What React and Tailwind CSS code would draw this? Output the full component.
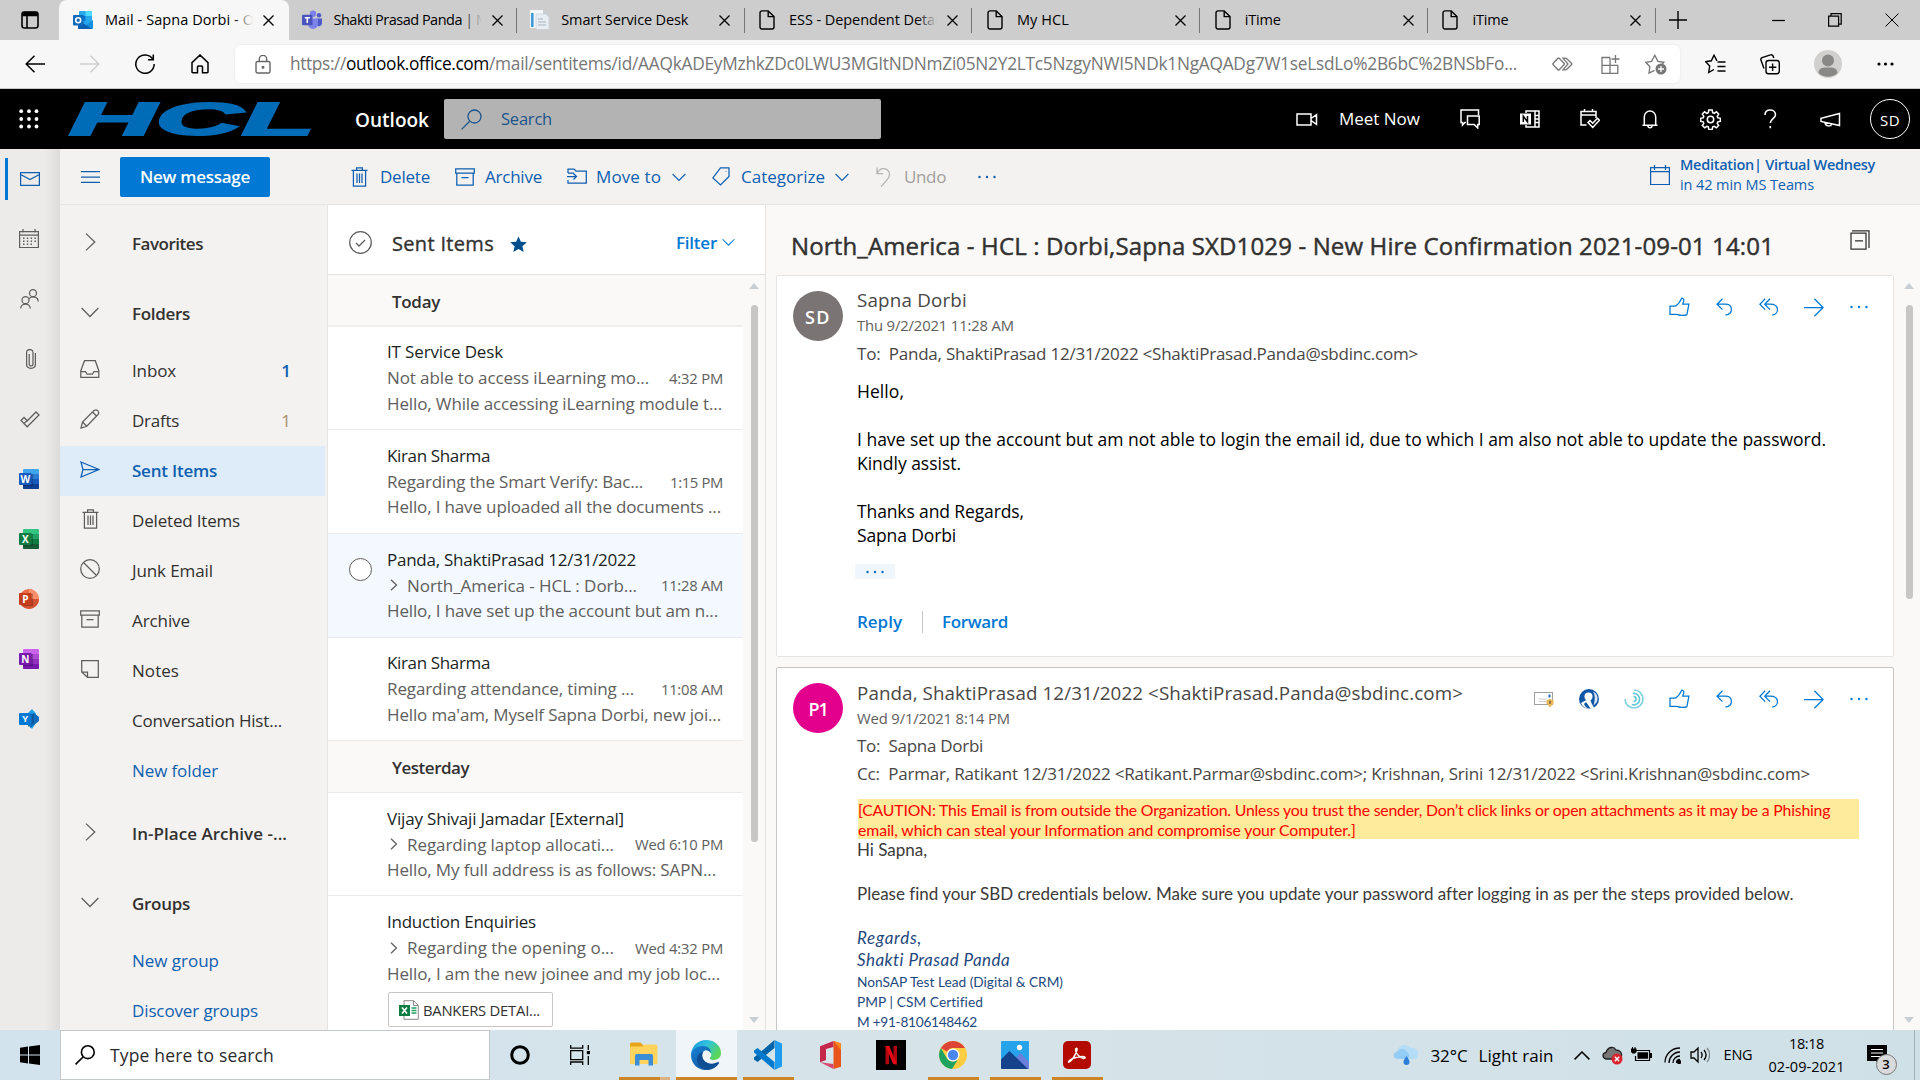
import React, { useLayoutEffect, useRef } from "react";

/* Single-line text that is tracked in or out until it is `w` pixels wide. */
function T({ w, className = "", children }) {
  const ref = useRef(null);
  useLayoutEffect(() => {
    const el = ref.current;
    if (!w || !el) return;
    el.style.letterSpacing = "0px";
    const natural = el.getBoundingClientRect().width;
    el.style.letterSpacing = `${(w - natural) / el.textContent.length}px`;
  }, [w]);
  return (
    <span ref={ref} className={`inline-block shrink-0 whitespace-pre ${className}`}>
      {children}
    </span>
  );
}

function Svg({ w = 20, h = 20, sw = 1.25, className = "", children, box }) {
  return (
    <svg
      width={w}
      height={h}
      viewBox={box || `0 0 ${w} ${h}`}
      fill="none"
      stroke="currentColor"
      strokeWidth={sw}
      className={`shrink-0 ${className}`}
    >
      {children}
    </svg>
  );
}

/* ---------- line icons ---------- */
const Close = ({ className }) => (
  <Svg w={11} h={11} className={className}><path d="M.5.5l10 10M10.5.5l-10 10" /></Svg>
);
const Page = () => (
  <Svg w={16} h={20} sw={1.4}>
    <path d="M3 .9h6.2L15 6.6V17a2 2 0 0 1-2 2H3a2 2 0 0 1-2-2V2.9a2 2 0 0 1 2-2z" />
    <path d="M9.2 1v5.6H15" />
  </Svg>
);
const ChevDown = ({ w = 14, className = "" }) => (
  <Svg w={w} h={9} box="0 0 14 9" sw={1.1} className={className}><path d="M.6 1l6.4 6.4L13.4 1" /></Svg>
);
const Dots = ({ className = "" }) => (
  <Svg w={18} h={4} className={className}>
    <g fill="currentColor" stroke="none">
      <circle cx="1.5" cy="2" r="1.2" /><circle cx="9" cy="2" r="1.2" /><circle cx="16.5" cy="2" r="1.2" />
    </g>
  </Svg>
);
const Trash = ({ className }) => (
  <Svg w={17} h={20} className={className}>
    <path d="M.5 3.4h16M2.4 3.4v15.8h12.2V3.4M5.6 3.2V.8h5.8v2.4M6 6.5v9.5M8.5 6.5v9.5M11 6.5v9.5" />
  </Svg>
);
const ArchiveIc = ({ className }) => (
  <Svg w={20} h={18} className={className}>
    <path d="M.7.8h18.6v4.4H.7zM1.8 5.2v12h16.4v-12M6.5 9.5h7" />
  </Svg>
);
const Like = () => (
  <Svg w={21} h={20} className="text-[#0078d4]">
    <path d="M1 9.2h5.2c3-1.8 5-4.4 6.4-8 2.2.1 2.6 1.5 2 3.2L13.7 7h6.2l-2 10.6c-3.4 1.5-6.8.9-10-.3H1z" />
  </Svg>
);
const ReplyIc = () => (
  <Svg w={17} h={18} className="text-[#0078d4]">
    <path d="M6.5.8L1 6.2l5.5 5.4M1 6.2h8c8.6 0 8.4 9.6.4 11" />
  </Svg>
);
const ReplyAll = () => (
  <Svg w={20} h={18} className="text-[#0078d4]">
    <path d="M6.2.8L.9 6.2l5.3 5.4M11 .8L5.7 6.2l5.3 5.4M5.7 6.2H11c9.600 0 9.600 9.600 2.200 11" />
  </Svg>
);
const ForwardIc = () => (
  <Svg w={20} h={19} className="text-[#0078d4]"><path d="M0 9.5h18.8M10.4.8l8.7 8.7-8.7 8.7" /></Svg>
);

/* ---------- product icons ---------- */
function OfficeApp({ letter, back, mid, low, dark, tile }) {
  return (
    <svg width="20" height="20" viewBox="0 0 20 20" className="shrink-0">
      <rect x="4" width="16" height="20" rx="1" fill={back} />
      <rect x="4" y="5" width="16" height="5" fill={mid} />
      <rect x="4" y="10" width="16" height="5" fill={low} />
      <path d="M4 15h16v4a1 1 0 0 1-1 1H5a1 1 0 0 1-1-1z" fill={dark} />
      <rect x="4" y="5" width="10" height="12" fill="#000" opacity=".25" />
      <rect y="4" width="12.6" height="12" rx="1" fill={tile} />
      <text x="6.3" y="13.6" fontSize="10" fontWeight="700" fill="#fff" textAnchor="middle" fontFamily="Open Sans, sans-serif">{letter}</text>
    </svg>
  );
}
const PowerPoint = () => (
  <svg width="20" height="20" viewBox="0 0 20 20" className="shrink-0">
    <circle cx="10" cy="10" r="10" fill="#ed6c47" />
    <path d="M10 0a10 10 0 0 1 10 10H10z" fill="#ff8f6b" />
    <path d="M0 10h20a10 10 0 0 1-20 0z" fill="#d35230" />
    <path d="M4 5h10v12H4z" opacity=".25" />
    <rect y="4" width="12.6" height="12" rx="1" fill="#c43e1c" />
    <text x="6.4" y="13.6" fontSize="10" fontWeight="700" fill="#fff" textAnchor="middle" fontFamily="Open Sans, sans-serif">P</text>
  </svg>
);
const Yammer = () => (
  <svg width="20" height="20" viewBox="0 0 20 20" className="shrink-0">
    <path d="M13 0l4 4.5-1 11L13 20 9 16V4z" fill="#1fa0e8" />
    <path d="M15 4l5 4v4l-5 4-4 3V6z" fill="#0f6cbd" />
    <path d="M9 5h6v9l-6 4z" fill="#104e8c" opacity=".7" />
    <rect y="4" width="12.6" height="12" rx="1" fill="#0078d4" />
    <text x="6.3" y="13.4" fontSize="9.5" fontWeight="700" fill="#fff" textAnchor="middle" fontFamily="Open Sans, sans-serif">Y</text>
  </svg>
);
const OutlookFav = () => (
  <svg width="20" height="20" viewBox="0 0 20 20" className="shrink-0">
    <rect x="6" y="1" width="13" height="15" rx="1" fill="#28a8ea" />
    <rect x="12.5" y="1" width="6.5" height="5" fill="#50d9ff" />
    <rect x="6" y="6" width="6.5" height="5" fill="#0078d4" />
    <path d="M5 10l8 5 7-5v8a1 1 0 0 1-1 1H6a1 1 0 0 1-1-1z" fill="#1490df" />
    <path d="M5 10l14 9H6a1 1 0 0 1-1-1z" fill="#0f5fb0" />
    <rect y="5" width="10.5" height="10.5" rx="1" fill="#0f6cbd" />
    <circle cx="5.2" cy="10.2" r="2.5" fill="none" stroke="#fff" strokeWidth="1.6" />
  </svg>
);
const TeamsFav = () => (
  <svg width="20" height="20" viewBox="0 0 20 20" className="shrink-0">
    <circle cx="17" cy="5.2" r="2.2" fill="#5059c9" />
    <circle cx="11" cy="3.8" r="3.2" fill="#7b83eb" />
    <path d="M14 8.5h6v5a3.2 3.2 0 0 1-6 1z" fill="#5059c9" />
    <path d="M6 8.5h10v5.5a5 5 0 0 1-10 0z" fill="#7b83eb" />
    <rect y="4.8" width="10.5" height="10.5" rx="1" fill="#4b53bc" />
    <path d="M2.7 7.8h5.2M5.3 7.8v5.2" stroke="#fff" strokeWidth="1.5" />
  </svg>
);
const DocFav = () => (
  <svg width="20" height="20" viewBox="0 0 20 20" className="shrink-0">
    <rect x="1" width="13" height="18" fill="#f4f7fa" />
    <rect x="2" y="3" width="2.6" height="14" fill="#3e9bd4" />
    <path d="M7 4h10l3 3v12.500H7z" fill="#e8edf2" stroke="#c3ccd4" strokeWidth=".6" />
    <path d="M9 9h5M9 12h8M9 15h8" stroke="#a7b3bd" />
  </svg>
);

/* ---------- browser chrome ---------- */
const TABS = [
  { title: "Shakti Prasad Panda | M", w: 155, icon: <TeamsFav />, fade: true },
  { title: "Smart Service Desk", w: 127, icon: <DocFav /> },
  { title: "ESS - Dependent Details", w: 160, icon: <Page />, fade: true },
  { title: "My HCL", w: 52, icon: <Page /> },
  { title: "iTime", w: 36, icon: <Page /> },
  { title: "iTime", w: 36, icon: <Page /> },
];

function TabTitle({ tab, bg }) {
  return (
    <div className="relative ml-[12px] h-6 w-[148px] shrink-0 overflow-hidden text-[14.5px] leading-6 text-black">
      <T w={tab.w}>{tab.title}</T>
      {tab.fade && <div className={`absolute right-0 top-0 h-6 w-5 bg-linear-to-r from-transparent ${bg}`} />}
    </div>
  );
}

function TabBar() {
  return (
    <div className="flex h-10 shrink-0 items-center bg-[#cdcdcd]">
      <div className="flex w-[59px] shrink-0 justify-center">
        <Svg w={18} h={18} sw={1.6}>
          <rect x="1" y="1" width="16" height="16" rx="2.5" /><path d="M1 3.3h16M6 5v12" />
          <path d="M2 1.5h14v3H2z" fill="currentColor" />
        </Svg>
      </div>
      <div className="flex h-10 w-[230px] shrink-0 items-center rounded-t-lg bg-[#f7f7f7] pl-[14px]">
        <OutlookFav />
        <TabTitle tab={{ title: "Mail - Sapna Dorbi - O", w: 149, fade: true }} bg="to-[#f7f7f7]" />
        <Close className="ml-[10px]" />
      </div>
      {TABS.map((t, i) => (
        <div key={i} className="flex h-10 w-[227.8px] shrink-0 items-center">
          <div className="ml-[12.5px] flex w-5 justify-center">{t.icon}</div>
          <TabTitle tab={t} bg="to-[#cdcdcd]" />
          <Close className="ml-[10px]" />
          <div className="ml-auto h-[25px] w-px bg-[#767676]" />
        </div>
      ))}
      <Svg w={18} h={18} sw={1.4} className="ml-[13px]"><path d="M0 9h18M9 0v18" /></Svg>
      <Svg w={13} h={13} className="ml-[85px]"><path d="M0 6.5h13" /></Svg>
      <Svg w={14} h={14} className="ml-[43px]"><path d="M.6 3.2h10v10h-10zM3 3V.7h10.200V11H11" /></Svg>
      <Svg w={14} h={14} sw={1} className="ml-[43px]"><path d="M.5.5l13 13M13.5.5l-13 13" /></Svg>
    </div>
  );
}

function AddressBar() {
  return (
    <div className="flex h-[49px] shrink-0 items-center border-b border-[#c9c9c9] bg-[#f7f7f7]">
      <Svg w={20} h={18} sw={1.5} className="ml-[25px]"><path d="M20 9H1.2M9.5.8L1.2 9l8.3 8.2" /></Svg>
      <Svg w={20} h={18} sw={1.5} className="ml-[35px] text-[#cfcfcf]"><path d="M0 9h18.8M10.5.8L18.8 9l-8.300 8.200" /></Svg>
      <Svg w={20} h={20} sw={1.5} className="ml-[35px]"><path d="M17.8 5.2A9.2 9.2 0 1 0 19.2 10M18.3.5v5.3H13" /></Svg>
      <Svg w={18} h={20} sw={1.5} className="ml-[36px]"><path d="M1 8.6L9 1l8 7.6V18a.8.8 0 0 1-.8.8h-4.700V13a1 1 0 0 0-1-1h-3a1 1 0 0 0-1 1v5.800H1.8A.8.8 0 0 1 1 18z" /></Svg>
      <div className="ml-[26px] flex h-[38px] w-[1445px] shrink-0 items-center rounded-md bg-white shadow-[0_0_3px_rgba(0,0,0,0.08)]">
        <Svg w={16} h={19} className="ml-5 text-[#666]" sw={1.4}>
          <rect x="1" y="6.5" width="14" height="11.5" rx="1.5" /><path d="M4.300 6.500V4a3.700 3.700 0 0 1 7.400 0v2.500" /><circle cx="8" cy="12.2" r=".8" fill="currentColor" />
        </Svg>
        <div className="ml-[19px] flex text-[17.300px] text-[#767676]">
          <T w={56}>https://</T>
          <T w={143} className="text-black">outlook.office.com</T>
          <T w={1028}>/mail/sentitems/id/AAQkADEyMzhkZDc0LWU3MGItNDNmZi05N2Y2LTc5NzgyNWI5NDk1NgAQADg7W1seLsdLo%2B6bC%2BNSbFo...</T>
        </div>
        <Svg w={21} h={14} className="ml-[35px] text-[#767676]" sw={1.3}>
          <path d="M7.200 1.300L12 6.300a1 1 0 0 1 0 1.400l-4.800 5a1 1 0 0 1-1.400 0L1.200 7.700a1 1 0 0 1 0-1.400L5.800 1.300a1 1 0 0 1 1.400 0zM11 1.100h2.500a1.500 1.500 0 0 1 1 .4l4.900 4.800a1 1 0 0 1 0 1.400l-4.900 4.800a1.500 1.500 0 0 1-1 .4H11l5-5.900z" />
        </Svg>
        <Svg w={19} h={19} className="ml-[28px] text-[#767676]" sw={1.3}>
          <path d="M9 2.500H1v15.800h15.800v-8H1M9 2.500v15.800M14.500 0v8M10.500 4h8" />
        </Svg>
        <Svg w={22} h={21} className="ml-[25px] text-[#767676]" sw={1.3}>
          <path d="M9.500 16.300L4 19l.9-6.200L.8 8.300l5.700-1L9.800 1.300l3.100 6 6 1-2 2.400" />
          <circle cx="16" cy="15" r="5.500" fill="#767676" stroke="none" /><path d="M16 12v6M13 15h6" stroke="#fff" />
        </Svg>
      </div>
      <Svg w={21} h={20} className="ml-[25px]" sw={1.4}>
        <path d="M12 6.800L9 1.200l-2.700 5.600-5.600.9 4 4.300-1 6.400L9 15.500M12.500 8h8M12.500 12.500h8M12.500 17h8" />
      </Svg>
      <Svg w={20} h={21} className="ml-[34px]" sw={1.4}>
        <rect x="6" y="6.500" width="13.300" height="13.300" rx="2.500" /><path d="M12.600 9.500v7.500M9 13.200h7.300M4 14.500L1 6.200a2 2 0 0 1 1-2.600L10.500.9a2 2 0 0 1 2.500 1L13.800 4" />
      </Svg>
      <svg width="28" height="28" viewBox="0 0 28 28" className="ml-[34px] shrink-0">
        <circle cx="14" cy="14" r="14" fill="#d2d0ce" /><circle cx="14" cy="10.500" r="6" fill="#8a8886" /><path d="M4.500 23c.5-6 5-5.500 9.500-5.500s9 0 9.500 5.500a14 14 0 0 1-19 0z" fill="#8a8886" />
      </svg>
      <Svg w={17} h={4} className="ml-[35px]"><g fill="currentColor" stroke="none"><circle cx="2" cy="2" r="1.600" /><circle cx="8.500" cy="2" r="1.600" /><circle cx="15" cy="2" r="1.600" /></g></Svg>
    </div>
  );
}

/* ---------- Outlook header ---------- */
function SuiteHeader() {
  return (
    <div className="flex h-[60px] shrink-0 items-center bg-black text-white">
      <svg width="20" height="20" viewBox="0 0 20 20" className="ml-[19px] shrink-0" fill="#fff">
        {[2.2, 10, 17.5].map((y) => [2.2, 10, 17.5].map((x) => <circle key={`${x}-${y}`} cx={x} cy={y} r="1.9" />))}
      </svg>
      <svg width="246" height="40" viewBox="0 0 246 40" className="ml-[31px] shrink-0 overflow-visible">
        <text x="-1" y="35.500" fontFamily="Liberation Sans, sans-serif" fontWeight="700" fontStyle="italic" fontSize="46" fill="#006bb6" stroke="#006bb6" strokeWidth="2" textLength="246" lengthAdjust="spacingAndGlyphs">HCL</text>
      </svg>
      <T w={74} className="ml-[39px] pt-0.5 text-[19px] font-semibold">Outlook</T>
      <div className="ml-[15px] flex h-10 w-[437px] shrink-0 items-center rounded-xs bg-[#b3b3b3] text-[#1c558c]">
        <Svg w={21} h={21} className="ml-[17px]" sw={1.3}><circle cx="13.500" cy="7.500" r="6.500" /><path d="M8.700 12.300L.6 20.400" /></Svg>
        <T w={51} className="ml-[19px] text-[16.5px]">Search</T>
      </div>
      <Svg w={22} h={13} sw={1.5} className="ml-[415px]"><path d="M1 1h14v11H1zM15 5.500l5.500-3.800v9.600L15 7.500" /></Svg>
      <T w={81} className="ml-[21px] text-[17px]">Meet Now</T>
      <Svg w={20} h={20} sw={1.5} className="ml-[40px]"><path d="M6 13.500H4.800L2.500 16v-2.500H1V1h17.500v5M7.500 7H19.200v8.500h-1.500V19l-3.500-3.500H7.500z" /></Svg>
      <Svg w={20} h={18} sw={1.5} className="ml-[40px]">
        <path d="M6 3V1h13v16H6v-2M15 1v16M15 5.500h4M15 9h4M15 12.500h4" /><rect y="3.500" width="11" height="11" fill="#fff" stroke="none" /><path d="M3.300 12V6.200l4.200 5.600V6" stroke="#000" />
      </Svg>
      <Svg w={20} h={20} sw={1.5} className="ml-[40px]"><path d="M16 9V2.500H1V16h5.500M1 6h15M4.500 0v3M12.500 0v3M8 13.500l2-2 2.700 2.700 4.800-5 2 2-6.800 7.200z" /></Svg>
      <Svg w={16} h={19} sw={1.5} className="ml-[42px]"><path d="M.5 15.300h15M2.300 15.300V6.800a5.700 5.700 0 0 1 11.400 0v8.500M5.800 15.500c.3 3 4.100 3 4.400 0" /></Svg>
      <Svg w={21} h={21} sw={1.5} className="ml-[42px]">
        <circle cx="10.500" cy="10.500" r="3.200" />
        <path d="M8.800 1h3.400l.5 2.700 1.500.6 2.200-1.500 2.300 2.300-1.500 2.200.6 1.500 2.600.5v3l-2.600.5-.6 1.500 1.500 2.200-2.300 2.300-2.200-1.500-1.500.6-.5 2.600H8.800l-.5-2.600-1.500-.6-2.200 1.500-2.300-2.300 1.500-2.200-.6-1.500-2.600-.5v-3l2.600-.5.6-1.500-1.500-2.200 2.300-2.300 2.200 1.500 1.500-.6z" />
      </Svg>
      <Svg w={13} h={20} sw={1.6} className="ml-[43px]"><path d="M1 6C1 2.800 3.200 1 6.200 1s5.300 1.900 5.300 4.700C11.500 9.500 6.300 9.800 6.300 14M6.300 17v2.300" /></Svg>
      <Svg w={21} h={15} sw={1.5} className="ml-[43px]"><path d="M19.500 1.500v12L1 9.500V6.300zM5 10.500c0 4 6.500 4.500 6.500 1.500" /></Svg>
      <div className="ml-[29px] flex size-10 shrink-0 items-center justify-center rounded-full border border-white">
        <T w={20} className="pt-0.5 text-[15px]">SD</T>
      </div>
    </div>
  );
}

/* ---------- left app rail ---------- */
function Rail() {
  const slot = "flex h-[60px] w-[58px] shrink-0 items-center justify-center text-[#605e5c]";
  return (
    <div className="flex w-[60px] shrink-0 flex-col bg-linear-to-r from-[#edebe9] from-75% to-[#dedcda]">
      <div className="flex h-[60px] shrink-0 items-center">
        <div className="ml-[5px] h-[42px] w-[3px] bg-[#0078d4]" />
        <Svg w={20} h={14} className="ml-3 text-[#0f5fb0]"><path d="M.6.6h18.8v12.8H.6zM.6 2.500l9.400 5 9.400-5" /></Svg>
      </div>
      <div className={slot}>
        <Svg w={20} h={19} className="-mt-0.5"><path d="M.6 2.500h18.800v16H.6zM.6 6h18.800M4 0v3.500M16 0v3.500" /><path d="M4 9.200h13M4 12.200h13M4 15.200h9" strokeDasharray="1.500 2.300" strokeWidth="1.500" /></Svg>
      </div>
      <div className={slot}>
        <Svg w={19} h={20}><circle cx="13" cy="4.200" r="3.500" /><circle cx="5.500" cy="11.200" r="3.500" /><path d="M.7 19.500c0-6 9.600-6 9.600 0M9.200 9.500c3-3 9-1.500 9 3" /></Svg>
      </div>
      <div className={slot}>
        <Svg w={10} h={20} className="ml-1"><path d="M9.400 4v11.500c0 5-8.800 5-8.800 0V3.500c0-4 6.400-4 6.400 0V15c0 2.500-3.800 2.500-3.800 0V5" /></Svg>
      </div>
      <div className={slot}>
        <Svg w={20} h={17} className="ml-0.5"><path d="M1 9.500l3-3 3.300 3.300L16 1l3 3L7.200 15.800zM4 12.500l3.200-3" /></Svg>
      </div>
      <div className={slot}><OfficeApp letter="W" back="#41a5ee" mid="#2b7cd3" low="#185abd" dark="#103f91" tile="#185abd" /></div>
      <div className={slot}><OfficeApp letter="X" back="#33c481" mid="#21a366" low="#107c41" dark="#185c37" tile="#107c41" /></div>
      <div className={slot}><PowerPoint /></div>
      <div className={slot}><OfficeApp letter="N" back="#ca64ea" mid="#ae4bd5" low="#9332bf" dark="#7719aa" tile="#7719aa" /></div>
      <div className={slot}><Yammer /></div>
    </div>
  );
}

/* ---------- command bar ---------- */
function CommandBar() {
  return (
    <div className="flex h-[56px] shrink-0 items-center border-b border-[#e6e4e2] bg-[#f3f2f1] pt-px text-[17px] text-[#0f5fb0]">
      <Svg w={19} h={12} className="ml-[21px]"><path d="M0 .7h19M0 6h19M0 11.300h19" /></Svg>
      <div className="ml-5 flex h-10 w-[150px] shrink-0 items-center justify-center rounded-xs bg-[#0078d4] text-white">
        <T w={110} className="font-semibold">New message</T>
      </div>
      <Trash className="ml-[81px]" />
      <T w={50} className="ml-[12px]">Delete</T>
      <ArchiveIc className="ml-[25px]" />
      <T w={57} className="ml-[10px]">Archive</T>
      <Svg w={20} h={16} className="-mt-0.5 ml-[25px]"><path d="M1 5V1h6l2 2h10.300v12H1v-3M1 5h6M0 8.500h9M6.500 5.500l3 3-3 3" /></Svg>
      <T w={65} className="ml-[9px]">Move to</T>
      <ChevDown className="ml-[11px]" />
      <Svg w={19} h={19} className="ml-[26px] -mt-0.5"><path d="M8.500.8H17v8.700L8.500 18 .9 11zM14 4v.5" /></Svg>
      <T w={84} className="ml-[10px]">Categorize</T>
      <ChevDown className="ml-[10px]" />
      <Svg w={16} h={20} className="ml-[27px] text-[#b5b3b1]"><path d="M1 .5v6h6M1.200 6C4 1 9 .3 12 3.500c4.500 5-1.500 10-7 16" /></Svg>
      <T w={42} className="ml-[12px] text-[#a19f9d]">Undo</T>
      <Dots className="ml-[32px]" />
      <Svg w={20} h={20} className="ml-auto -mt-1"><path d="M.6 2.500h18.800v17H.6zM.6 6.500h18.800M4.500 0v5M15.500 0v5" /></Svg>
      <div className="-mt-1 ml-[10px] mr-[45px] flex flex-col items-start text-[14.5px] leading-5">
        <T w={195} className="font-semibold">Meditation| Virtual Wednesy</T>
        <T w={134}>in 42 min MS Teams</T>
      </div>
    </div>
  );
}

/* ---------- folder pane ---------- */
function Folder({ icon, label, w, count, countClass = "", className = "text-[#323130]" }) {
  return (
    <div className={`flex h-[50px] shrink-0 items-center pl-[15px] ${className}`}>
      <div className="flex w-[30px] justify-center pb-1">{icon}</div>
      <T w={w} className="ml-[27px]">{label}</T>
      {count && <span className={`ml-auto mr-[34px] ${countClass}`}>{count}</span>}
    </div>
  );
}
const Right = <Svg w={11} h={18} className="text-[#605e5c]"><path d="M1 .6l8.800 8.400L1 17.400" /></Svg>;
const Down = <Svg w={18} h={11} className="text-[#605e5c]"><path d="M.6 1L9 9.500 17.400 1" /></Svg>;

function FolderPane() {
  return (
    <div className="flex w-[267px] shrink-0 flex-col overflow-hidden bg-[#f3f2f1] pt-[14px] pr-[2px] text-[17px]">
      <Folder icon={Right} label="Favorites" w={71} className="font-semibold text-[#323130]" />
      <div className="h-5 shrink-0" />
      <Folder icon={Down} label="Folders" w={58} className="font-semibold text-[#323130]" />
      <div className="h-[7px] shrink-0" />
      <Folder icon={<Svg w={20} h={18} className="text-[#605e5c]"><path d="M4.500.7h10.800l3.500 10v6.600H.8v-6.600zM.8 11.500h4.700l1.500 2.500h5.500l1.500-2.500h4.800" /></Svg>} label="Inbox" w={44} count="1" countClass="font-semibold text-[#0f5fb0]" />
      <Folder icon={<Svg w={20} h={20} className="text-[#605e5c]"><path d="M1 19l1.500-6L14 1.500c3-2 6 1.500 4 4L6.800 17.300zM2.500 13l4.300 4.300M12.500 3l4.500 4.500" /></Svg>} label="Drafts" w={47} count="1" countClass="text-[#a88f6c]" />
      <Folder icon={<Svg w={20} h={17}><path d="M1 1l18 7.500L1 16l2-7.500zM3 8.500h16" /></Svg>} label="Sent Items" w={85} className="bg-[#deecf9] font-semibold text-[#0f5fb0]" />
      <Folder icon={<Trash className="text-[#605e5c]" />} label="Deleted Items" w={108} />
      <Folder icon={<Svg w={20} h={20} className="text-[#605e5c]"><circle cx="10" cy="10" r="9.300" /><path d="M3.500 3.500l13 13" /></Svg>} label="Junk Email" w={81} />
      <Folder icon={<ArchiveIc className="text-[#605e5c]" />} label="Archive" w={58} />
      <Folder icon={<Svg w={18} h={18} className="text-[#605e5c]"><path d="M.7.7h16.600v16.600H6.500L.7 12zM.7 12h5.800v5.300" /></Svg>} label="Notes" w={47} />
      <Folder label="Conversation Hist..." w={150} />
      <Folder label="New folder" w={86} className="text-[#0f5fb0]" />
      <div className="h-[13px] shrink-0" />
      <Folder icon={Right} label="In-Place Archive -..." w={155} className="font-semibold text-[#323130]" />
      <div className="h-5 shrink-0" />
      <Folder icon={Down} label="Groups" w={58} className="font-semibold text-[#323130]" />
      <div className="h-[7px] shrink-0" />
      <Folder label="New group" w={87} className="text-[#0f5fb0]" />
      <Folder label="Discover groups" w={126} className="text-[#0f5fb0]" />
    </div>
  );
}

/* ---------- message list ---------- */
const TODAY = [
  { from: "IT Service Desk", fw: 116, subj: "Not able to access iLearning mo...", sw: 262, time: "4:32 PM", tw: 54, body: "Hello, While accessing iLearning module t...", bw: 335 },
  { from: "Kiran Sharma", fw: 103, subj: "Regarding the Smart Verify: Bac...", sw: 256, time: "1:15 PM", tw: 53, body: "Hello, I have uploaded all the documents ...", bw: 334 },
  { from: "Panda, ShaktiPrasad 12/31/2022", fw: 249, subj: "North_America - HCL : Dorb...", sw: 230, time: "11:28 AM", tw: 62, body: "Hello, I have set up the account but am n...", bw: 331, thread: true, active: true },
  { from: "Kiran Sharma", fw: 103, subj: "Regarding attendance, timing ...", sw: 247, time: "11:08 AM", tw: 62, body: "Hello ma'am, Myself Sapna Dorbi, new joi...", bw: 334 },
];
const YESTERDAY = [
  { from: "Vijay Shivaji Jamadar [External]", fw: 237, subj: "Regarding laptop allocati...", sw: 207, time: "Wed 6:10 PM", tw: 88, body: "Hello, My full address is as follows: SAPN...", bw: 329, thread: true },
  { from: "Induction Enquiries", fw: 149, subj: "Regarding the opening o...", sw: 207, time: "Wed 4:32 PM", tw: 88, body: "Hello, I am the new joinee and my job loc...", bw: 333, thread: true, file: true },
];

function Item({ m }) {
  return (
    <div className={`flex shrink-0 border-b border-[#edebe9] text-[17px] text-[#605e5c] ${m.file ? "h-[150px]" : "h-[103.7px]"} ${m.active ? "bg-[#f3f9fe]" : "bg-white"}`}>
      <div className="w-[59px] shrink-0 pl-[21px] pt-[24px]">
        {m.active && <div className="size-[23px] rounded-full border-[1.5px] border-[#605e5c] bg-white" />}
      </div>
      <div className="flex w-[336px] shrink-0 flex-col pt-[13px]">
        <div className="flex h-[25px] items-center"><T w={m.fw} className="text-[#201f1e]">{m.from}</T></div>
        <div className="flex h-[27px] items-center">
          {m.thread && <Svg w={8} h={12} className="ml-[3px] mr-[9px]"><path d="M1 .7L6.500 6 1 11.300" /></Svg>}
          <T w={m.sw}>{m.subj}</T>
          <T w={m.tw} className="ml-auto text-[14.8px]">{m.time}</T>
        </div>
        <div className="flex h-6 items-center"><T w={m.bw}>{m.body}</T></div>
        {m.file && (
          <div className="ml-px mt-[7px] flex h-[35px] w-[165px] items-center rounded-xs border border-[#c8c6c4] pl-[10px]">
            <svg width="20" height="20" viewBox="0 0 20 20" className="shrink-0">
              <path d="M5 .7h9.500l4.800 4.800v13.800H5z" fill="#fff" stroke="#8a8886" /><path d="M14.500.7v4.800h4.800" fill="none" stroke="#8a8886" />
              <path d="M12.500 8h5M12.500 10.500h5M12.500 13h5" stroke="#21a366" strokeWidth="1.500" />
              <rect y="5" width="11" height="11" fill="#107c41" /><path d="M3 7.500l5 6M8 7.500l-5 6" stroke="#fff" strokeWidth="1.600" />
            </svg>
            <T w={117} className="ml-1 text-[14.8px] text-[#323130]">BANKERS DETAI...</T>
          </div>
        )}
      </div>
    </div>
  );
}

const ScrollArrow = ({ down }) => (
  <svg width="10" height="6" viewBox="0 0 10 6" className="shrink-0" fill="#c8cfd4"><path d={down ? "M0 0h10L5 6z" : "M0 6h10L5 0z"} /></svg>
);

function MessageList() {
  return (
    <div className="flex w-[439px] shrink-0 flex-col border-x border-[#e6e4e2] bg-[#faf9f8]">
      <div className="flex h-[70px] shrink-0 items-center border-b border-[#e1dfdd] bg-white pl-[21px]">
        <Svg w={23} h={23} className="mt-1.5 text-[#605e5c]"><circle cx="11.500" cy="11.500" r="10.800" /><path d="M7 12l3 3 6-6" /></Svg>
        <T w={102} className="ml-[20px] mt-2 text-[20px] text-[#323130] [-webkit-text-stroke:0.35px]">Sent Items</T>
        <svg width="17" height="17" viewBox="0 0 17 17" className="ml-[16px] mt-2.5 shrink-0" fill="#004e8c"><path d="M8.500.5l2.400 5.200 5.900.6-4.400 3.900 1.300 5.800-5.200-3-5.200 3 1.300-5.800L.2 6.300l5.900-.6z" /></svg>
        <T w={41} className="ml-[149px] mt-1.5 text-[17px] font-semibold text-[#0078d4]">Filter</T>
        <ChevDown w={13} className="ml-[5px] mt-1.5 text-[#0078d4]" />
      </div>
      <div className="flex min-h-0 flex-1">
        <div className="flex w-[415px] shrink-0 flex-col overflow-hidden">
          <div className="flex h-[51.5px] shrink-0 items-center border-b-2 border-[#f0eeec] pl-[64px] pt-[3px] text-[17px] font-semibold text-[#323130]"><T w={48}>Today</T></div>
          {TODAY.map((m, i) => <Item key={i} m={m} />)}
          <div className="flex h-[51.5px] shrink-0 items-center border-b border-[#edebe9] pl-[64px] pt-0.5 text-[17px] font-semibold text-[#323130]"><T w={77}>Yesterday</T></div>
          {YESTERDAY.map((m, i) => <Item key={i} m={m} />)}
        </div>
        <div className="flex w-[21px] shrink-0 flex-col items-center pt-2 pb-[7px]">
          <ScrollArrow />
          <div className="ml-px mt-4 h-[537px] w-[7px] rounded-full bg-[#c8c6c4]" />
          <div className="mt-auto"><ScrollArrow down /></div>
        </div>
      </div>
    </div>
  );
}

/* ---------- reading pane ---------- */
const Slot = ({ children }) => <div className="flex h-5 w-[45px] items-center justify-center">{children}</div>;
const Actions = ({ extra }) => (
  <div className="mr-[11.5px] mt-[21px] flex shrink-0">
    {extra}
    <Slot><Like /></Slot><Slot><ReplyIc /></Slot><Slot><ReplyAll /></Slot><Slot><ForwardIc /></Slot>
    <Slot><Dots className="text-[#0078d4]" /></Slot>
  </div>
);
const AddIns = (
  <>
    <Slot>
      <svg width="20" height="17" viewBox="0 0 20 17"><rect x=".5" y="1.500" width="18" height="12" fill="#fff" stroke="#a19f9d" /><path d="M4.500 8h8M4.500 10.500h8" stroke="#d2d0ce" /><path d="M14.500 3.500h2v3h-2z" fill="#2a66b8" /><path d="M12.500 9l3.500-1 3.500 1v3.500L16 16.500l-3.500-4z" fill="#e8b85a" /><path d="M16 9.800v3" stroke="#333" /></svg>
    </Slot>
    <Slot>
      <svg width="20" height="20" viewBox="0 0 20 20"><circle cx="10" cy="10" r="10" fill="#0f56a6" /><circle cx="9.500" cy="7.500" r="4" fill="#fff" /><path d="M2 14.500c2-3 4.500-2 6-4h3.500c0 3 2 5 3.500 8.300C10 21.500 4.500 19 2 14.500z" fill="#fff" /><path d="M5 15l2-2 4.500 6.500C8.500 20 6 18 5 15z" fill="#0f56a6" /><path d="M14 2.500c2.500 4 2 9 .5 14l3-3c2-3 1.500-9-3.500-11z" fill="#fff" opacity=".85" /></svg>
    </Slot>
    <Slot>
      <svg width="20" height="20" viewBox="0 0 20 20" fill="none" stroke="#5fc6da" strokeWidth="1.600"><path d="M10 1a9 9 0 1 1-9 9" opacity=".8" /><path d="M9 4.500a5.700 5.700 0 1 1-1 11" /><path d="M9.500 7.500a2.500 2.500 0 1 1 0 5" /></svg>
    </Slot>
  </>
);
const Avatar = ({ text, w, className }) => (
  <div className={`ml-4 mt-[15px] flex size-[50px] shrink-0 items-center justify-center rounded-full pt-0.5 text-[18px] font-semibold text-white ${className}`}><T w={w}>{text}</T></div>
);
const Line = ({ w, className = "", children }) => (
  <div className={`flex shrink-0 items-center ${className}`}>{children && <T w={w}>{children}</T>}</div>
);

function ReadingPane() {
  return (
    <div className="flex min-w-0 flex-1 flex-col bg-[#faf9f8]">
      <div className="flex h-[70px] shrink-0 items-center pl-[25px]">
        <T w={983} className="mt-[11px] text-[24px] text-[#323130] [-webkit-text-stroke:0.45px]">North_America - HCL : Dorbi,Sapna SXD1029 - New Hire Confirmation 2021-09-01 14:01</T>
        <Svg w={20} h={20} className="ml-[76px] text-[#323130]"><path d="M1 3h15v16H1zM2 .8h17V18M5 10.800h8" /></Svg>
      </div>
      <div className="flex min-h-0 flex-1">
        <div className="ml-[10px] flex w-[1118px] shrink-0 flex-col overflow-hidden">
          <div className="flex h-[382px] shrink-0 rounded-xs border border-[#e6e4e2] bg-white">
            <Avatar text="SD" w={26} className="bg-[#7a7574]" />
            <div className="ml-[14px] flex min-w-0 flex-1 flex-col">
              <div className="flex h-[62px] shrink-0 justify-between">
                <div className="flex flex-col pt-3">
                  <Line w={110} className="h-[25px] text-[18.8px] text-[#484644]">Sapna Dorbi</Line>
                  <Line w={157} className="h-6 text-[14.8px] text-[#605e5c]">Thu 9/2/2021 11:28 AM</Line>
                </div>
                <Actions />
              </div>
              <Line w={561} className="h-8 text-[17px] text-[#484644]">{"To:  Panda, ShaktiPrasad 12/31/2022 <ShaktiPrasad.Panda@sbdinc.com>"}</Line>
              <div className="mt-[9px] flex flex-col text-[17.5px] text-black">
                <Line w={47} className="h-6">Hello,</Line>
                <Line className="h-6" />
                <Line w={969} className="h-6">I have set up the account but am not able to login the email id, due to which I am also not able to update the password.</Line>
                <Line w={104} className="h-6">Kindly assist.</Line>
                <Line className="h-6" />
                <Line w={167} className="h-6">Thanks and Regards,</Line>
                <Line w={99} className="h-6">Sapna Dorbi</Line>
              </div>
              <div className="-ml-[2px] mt-[17px] flex h-[15px] w-10 shrink-0 items-center justify-center rounded-xs bg-[#eff6fc]"><Dots className="text-[#0f6cbd]" /></div>
              <div className="mt-[31px] flex h-6 items-center text-[17px] font-semibold text-[#0078d4]">
                <T w={45}>Reply</T>
                <div className="ml-5 h-[22px] w-px bg-[#c8c6c4]" />
                <T w={66} className="ml-[19px]">Forward</T>
              </div>
            </div>
          </div>
          <div className="mt-[10px] flex h-[500px] shrink-0 rounded-xs border border-[#c8c6c4] bg-white">
            <Avatar text="P1" w={19} className="bg-[#e3008c]" />
            <div className="ml-[14px] flex min-w-0 flex-1 flex-col">
              <div className="flex h-[63px] shrink-0 justify-between">
                <div className="flex flex-col pt-3">
                  <Line w={606} className="h-[26px] text-[18.8px] text-[#484644]">{"Panda, ShaktiPrasad 12/31/2022 <ShaktiPrasad.Panda@sbdinc.com>"}</Line>
                  <Line w={153} className="h-6 text-[14.8px] text-[#605e5c]">Wed 9/1/2021 8:14 PM</Line>
                </div>
                <Actions extra={AddIns} />
              </div>
              <Line w={126} className="h-[30px] text-[17px] text-[#484644]">{"To:  Sapna Dorbi"}</Line>
              <Line w={953} className="h-[26px] text-[17px] text-[#484644]">{"Cc:  Parmar, Ratikant 12/31/2022 <Ratikant.Parmar@sbdinc.com>; Krishnan, Srini 12/31/2022 <Srini.Krishnan@sbdinc.com>"}</Line>
              <div className="mt-3 ml-px flex w-[1001px] flex-col bg-[#ffeb9c] font-[Lato] text-[15.8px] text-[#ff0000]">
                <Line w={972} className="h-5 pt-px">[CAUTION: This Email is from outside the Organization. Unless you trust the sender, Don’t click links or open attachments as it may be a Phishing</Line>
                <Line w={498} className="h-5 pt-px">email, which can steal your Information and compromise your Computer.]</Line>
              </div>
              <div className="flex flex-col font-[Lato] text-[17px] text-[#3b3a39]">
                <Line w={70} className="h-[22px]">Hi Sapna,</Line>
                <Line className="h-[22px]" />
                <Line w={936} className="h-[22px]">Please find your SBD credentials below. Make sure you update your password after logging in as per the steps provided below.</Line>
                <Line className="h-[22px]" />
                <Line w={65} className="h-[22px] italic text-[#1f497d]">Regards,</Line>
                <Line w={153} className="h-[22px] italic text-[#1f497d]">Shakti Prasad Panda</Line>
                <div className="mt-px flex flex-col text-[13.7px] text-[#1f497d]">
                  <Line w={206} className="h-5">{"NonSAP Test Lead (Digital & CRM)"}</Line>
                  <Line w={126} className="h-5">PMP | CSM Certified</Line>
                  <Line w={120} className="h-5">M +91-8106148462</Line>
                </div>
              </div>
            </div>
          </div>
        </div>
        <div className="ml-2 flex w-[14px] shrink-0 flex-col items-center pt-2 pb-[7px]">
          <ScrollArrow />
          <div className="ml-px mt-4 h-[294px] w-[7px] rounded-full bg-[#c8c6c4]" />
          <div className="mt-auto"><ScrollArrow down /></div>
        </div>
      </div>
    </div>
  );
}

/* ---------- Windows taskbar ---------- */
function Task({ w = "w-[51px]", ml = "", on, active, children }) {
  return (
    <div className={`flex h-[50px] shrink-0 flex-col items-center ${w} ${ml} ${active ? "bg-[#eff5f8]" : ""}`}>
      <div className="flex h-[47px] items-center pt-[3px]">{children}</div>
      {on && <div className="h-[3px] w-full bg-[#cc8427]" />}
    </div>
  );
}

function Taskbar() {
  return (
    <div className="flex h-[50px] shrink-0 items-center bg-linear-to-r from-[#d3e3ee] via-[#d6e4e9] to-[#cfe0e7] text-black">
      <div className="flex w-[60px] shrink-0 justify-center">
        <svg width="20" height="20" viewBox="0 0 20 20"><path d="M0 2.800l8-1.200v7.900H0zM9 1.400L20 0v9.500H9zM0 10.500h8v7.900l-8-1.200zM9 10.500h11V20L9 18.600z" /></svg>
      </div>
      <div className="flex h-[50px] w-[430px] shrink-0 items-center border border-[#c3c8cb] bg-white text-[#2b2b2b]">
        <Svg w={20} h={20} sw={1.6} className="ml-[14px] text-black"><circle cx="12.800" cy="7.200" r="6.400" /><path d="M8.300 11.700L.6 19.400" /></Svg>
        <T w={164} className="ml-[15px] text-[17.5px]">Type here to search</T>
      </div>
      <Svg w={20} h={20} sw={3} className="ml-5"><circle cx="10" cy="10" r="8.300" /></Svg>
      <Svg w={20} h={20} className="ml-10" sw={1.3}><path d="M.7 5.700h12v9H.7zM.7 0v3.200h12V0M.7 20v-3h12v3M18.300 0v5M18.300 11v9" /><path d="M16.800 6h3.200v3.200h-3.200z" fill="currentColor" stroke="none" /></Svg>
      <div className="ml-[29px] flex w-[51px] shrink-0 flex-col">
        <div className="flex h-[47px] items-center pl-[11px] pt-px">
          <svg width="28" height="24" viewBox="0 0 28 24"><path d="M0 2a1.500 1.500 0 0 1 1.500-1.500h9L13 3H27v18H0z" fill="#e8a317" /><path d="M0 4.500h12L14 2.500h12a1.500 1.500 0 0 1 1.500 1.500v18H0z" fill="#ffd35c" /><path d="M5 23.500V13.500A1.500 1.500 0 0 1 6.500 12h15a1.500 1.500 0 0 1 1.500 1.500v10h-4.500V18h-9v5.500z" fill="#3b8dd8" /></svg>
        </div>
        <div className="flex h-[3px]"><div className="w-[41px] bg-[#cc8427]" /><div className="w-[10px] bg-[#dcb184]" /></div>
      </div>
      <Task w="w-[61px]" ml="ml-[6px]" on active>
        <svg width="30" height="30" viewBox="0 0 30 30" className="mr-px">
          <defs>
            <linearGradient id="edgeTop" x1="0" y1="0" x2="1" y2=".5"><stop offset="0" stopColor="#1a8fd8" /><stop offset=".5" stopColor="#2fc2df" /><stop offset="1" stopColor="#5bd65a" /></linearGradient>
            <linearGradient id="edgeLow" x1="0" y1="0" x2="1" y2="1"><stop offset="0" stopColor="#1783d8" /><stop offset="1" stopColor="#114a8b" /></linearGradient>
          </defs>
          <path d="M0 14C1 5.500 7.500 0 15 0c9 0 15 6 15 13 0 5-4 7-7.500 7-4 0-5-1.500-4-3 2-3 0-6.500-5-7.500C8 8.500 2 11 0 14z" fill="url(#edgeTop)" />
          <path d="M0 15c0-5 5.500-9 12-9 5 0 8 3 8 7-1.500-2-4-3-6-2.500-4 1.500-4 8.500.5 12 3.500 2.500 9 2.500 12.500 0 1-.5 1.500 0 1 1-6 9-18 8-24 2C1.500 22.500 0 19 0 15z" fill="url(#edgeLow)" />
          <path d="M12 12c-2 5 0 9 5 11 4 1.500 7 .5 10.500-1.500-3 8-13 9-18 5.500C4 23 5 13 12 12z" fill="#0e4f94" />
          <path d="M19.500 17c-1.500 1.300-.5 3 3 3 0 1.500-5 2-7 0-2.500-2.500-3-7.500 0-9.300 4 .6 6 4 4 6.300z" fill="#eff5f8" />
        </svg>
      </Task>
      <Task ml="ml-[5.500px]" on>
        <svg width="30" height="30" viewBox="0 0 30 30"><path d="M21.500 0v8L4.500 22 1 19.500v-2z" fill="#0065a9" /><path d="M21.500 30v-8L4.500 8 1 10.500v2z" fill="#007acc" /><path d="M21.500 0L29 3.500v23L21.500 30c.5-.5.5-1.500.5-3V3c0-1.500 0-2.500-.5-3z" fill="#1f9cf0" /></svg>
      </Task>
      <Task ml="ml-[10.500px]">
        <svg width="24" height="28" viewBox="0 0 24 28"><path d="M15.500 0L2 5.200v16L8 19V8l7.500-2z" fill="#c5274a" /><path d="M15.500 0L23 2.200v23.600L15.500 28z" fill="#e8541a" /><path d="M15.500 28L2 21.200 15.500 23z" fill="#d64a6d" /><path d="M16 .2L23 2.200V9z" fill="#ff8b1f" /></svg>
      </Task>
      <Task ml="ml-[10.5px]">
        <svg width="30" height="30" viewBox="0 0 30 30"><path d="M0 0h30v30H0z" /><path d="M9.500 6h3.500v18l-3.500.5zM17.500 6H21v18.500l-3.500-.5z" fill="#b1060f" /><path d="M9.500 6h3.800l7.700 18.500-3.800-.5z" fill="#e50914" /></svg>
      </Task>
      <Task ml="ml-[11px]" on>
        <svg width="28" height="28" viewBox="0 0 28 28"><circle cx="14" cy="14" r="14" fill="#ffcd41" /><path d="M1.900 7A14 14 0 0 1 26.100 7H14a7 7 0 0 0-6.100 3.500z" fill="#db4437" /><path d="M1.900 7A14 14 0 0 0 13 28l6.500-10.500A7 7 0 0 1 7.900 17.500z" fill="#1ea362" /><circle cx="14" cy="14" r="6.500" fill="#fff" /><circle cx="14" cy="14" r="5.200" fill="#4a86f0" /></svg>
      </Task>
      <Task ml="ml-[11px]" on>
        <svg width="28" height="28" viewBox="0 0 28 28"><rect width="28" height="28" rx="1" fill="#27a3ec" /><path d="M14 17.500L19.500 12l8.500 9v6a1 1 0 0 1-1 1H10z" fill="#6d7fdc" /><path d="M0 18.500L8.500 10 27 28H1a1 1 0 0 1-1-1z" fill="#14438c" /><circle cx="18.500" cy="6.500" r="2.700" fill="#fff" /></svg>
      </Task>
      <Task ml="ml-[11px]" on>
        <svg width="28" height="28" viewBox="0 0 28 28"><rect width="28" height="28" rx="5" fill="#b30b00" /><path d="M6 21c3-1 7-8 8-12 .5-2.500-1.500-2.500-1.500 0 .5 4 4.500 8 8 8.500 2.500 0 2-2-.5-2C16 15.500 9.500 17 7 19c-2 1.500-1.500 2.500-1 2z" fill="none" stroke="#fff" strokeWidth="1.500" /></svg>
      </Task>

      <svg width="26" height="22" viewBox="0 0 26 22" className="ml-[290px] shrink-0"><path d="M5 15a5 5 0 0 1 0-9C6 1 14-1 17 4c5-1 9 2 8 7 0 3-2 4-4 4z" fill="#b5dcf7" /><path d="M4 15c-4-1-5-6 0-7 2-4 8-4 10 0 3 1 3 6 0 7z" fill="#93cdf5" /><path d="M13.500 12c2 3 3 4.500 3 6a3 3 0 0 1-6 0c0-1.500 1-3 3-6z" fill="#2b7fd6" /></svg>
      <T w={37} className="ml-3 mt-0.5 text-[17px]">32°C</T>
      <T w={75} className="ml-[11px] mt-0.5 text-[17px]">Light rain</T>
      <Svg w={16} h={9} sw={1.5} className="ml-5"><path d="M.6 8.400L8 1l7.400 7.400" /></Svg>
      <svg width="21" height="19" viewBox="0 0 21 19" className="ml-3 shrink-0"><path d="M4 13C0 12 0 7 4 6.500 6 .5 12 0 14 4c5 0 6 4 5.500 6L17 13z" fill="#777" stroke="#222" strokeWidth="1.300" /><circle cx="15" cy="13" r="5.500" fill="#d9232e" /><path d="M12.800 10.800l4.400 4.400M17.200 10.800l-4.400 4.400" stroke="#fff" strokeWidth="1.400" /></svg>
      <svg width="21" height="16" viewBox="0 0 21 16" className="ml-[8px] shrink-0"><path d="M5 3.500h13.500v10H4.500V9" fill="none" stroke="#000" strokeWidth="1.200" /><path d="M6.500 5.300h10.500v6.500H6.500zM19 6h2v5h-2zM0 1.500h5.500V5L4 6.500H1.500L0 5zM1 0h1v2H1zM3.500 0h1v2h-1z" /></svg>
      <Svg w={17} h={17} className="ml-[12px]" sw={1.3}><path d="M1 15.500C1 7.500 7.500 1 16 1M5 16C5 10 10 5 16 5M9 16c0-4 3-7 7-7M12.500 16c0-2 1.500-3.500 3.500-3.500" /><circle cx="15" cy="15" r="1.500" fill="currentColor" /></Svg>
      <Svg w={20} h={18} className="ml-[9px]" sw={1.3}><path d="M1 6h3l4-4v14l-4-4H1zM11 6c1.500 2 1.500 4 0 6M14 4c2.500 3 2.500 7 0 10" /><path d="M17 2c3.500 4 3.500 10 0 14" opacity=".4" /></Svg>
      <T w={29} className="ml-[14px] text-[14.5px]">ENG</T>
      <div className="ml-[16px] flex w-[76px] shrink-0 flex-col items-center text-[14.5px] leading-[23px]"><T w={35}>18:18</T><T w={76}>02-09-2021</T></div>
      <div className="relative ml-[22px] h-5 w-[22px] shrink-0">
        <svg width="20" height="20" viewBox="0 0 20 20"><path d="M0 0h20v16h-7v4l-4-4H0z" /><path d="M4 4.500h12M4 8h12M4 11.500h12" stroke="#fff" /></svg>
        <div className="absolute left-[9px] top-[9px] flex size-[21px] items-center justify-center rounded-full border border-[#777] bg-[#d8dadb] text-[13px] font-semibold">3</div>
      </div>
      <div className="ml-auto mr-[5px] h-[50px] w-px bg-[#9fb0b8]" />
    </div>
  );
}

export default function App() {
  return (
    <div className="flex h-[1080px] w-[1920px] flex-col overflow-hidden bg-white font-['Open_Sans','Noto_Sans',sans-serif] text-black">
      <TabBar />
      <AddressBar />
      <SuiteHeader />
      <div className="flex min-h-0 flex-1 overflow-hidden">
        <Rail />
        <div className="flex min-w-0 flex-1 flex-col">
          <CommandBar />
          <div className="flex min-h-0 flex-1">
            <FolderPane />
            <MessageList />
            <ReadingPane />
          </div>
        </div>
      </div>
      <Taskbar />
    </div>
  );
}
